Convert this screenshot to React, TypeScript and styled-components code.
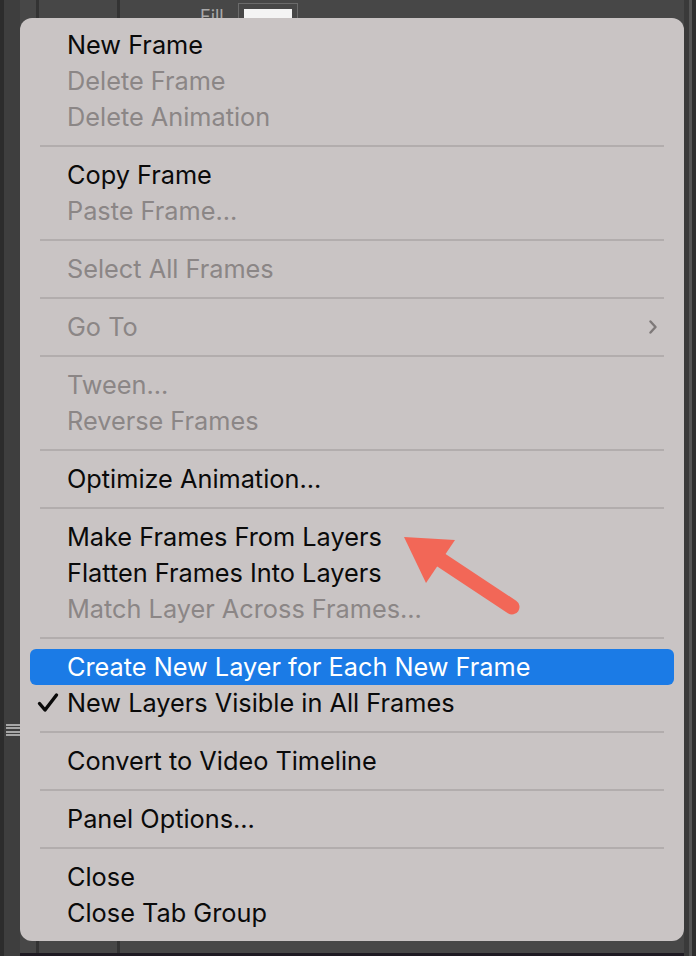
import styled, { createGlobalStyle } from "styled-components";
import { Fragment } from "react";

const GlobalStyle = createGlobalStyle`
    html, body {
        margin: 0;
        padding: 0;
        background: #474747;
    }
    body {
        font-family: "Inter", "Noto Sans", sans-serif;
    }
`

const Page = styled.div`
    display: flex;
    width: 696px;
    height: 956px;
    overflow: hidden;
    background: #474747;
`

const LeftRail = styled.div`
    width: 20px;
    display: flex;
    flex-direction: column;
    justify-content: flex-end;
    padding-bottom: 220px;
    box-sizing: border-box;
    background: linear-gradient(to right, #2c2c2c 0, #2c2c2c 4px, #3e3e3e 4px);
`

const Burger = styled.div`
    margin-left: 6px;
    width: 14px;
    height: 12px;
    background: repeating-linear-gradient(to bottom, #a6a6a6 0, #a6a6a6 2px, transparent 2px, transparent 3.5px);
`

const RightRail = styled.div`
    width: 12px;
    background: linear-gradient(to right, #3a3a3a 0, #3a3a3a 5px, #555 5px, #555 8px, #2e2e2e 8px);
`

const Center = styled.div`
    flex: 1;
    display: flex;
    flex-direction: column;
    background:
        linear-gradient(to right,
            transparent 0, transparent 16px, #333 16px, #333 19px,
            transparent 19px, transparent 97px, #333 97px, #333 100px,
            transparent 100px);
`

const TopStrip = styled.div`
    height: 18px;
    display: flex;
    align-items: flex-start;
    overflow: hidden;
`

const FillLabel = styled.span`
    margin-left: 180px;
    margin-top: 8px;
    font-size: 18px;
    line-height: 18px;
    color: #a9a9a9;
`

const Swatch = styled.div`
    margin-left: 14px;
    margin-top: 3px;
    width: 60px;
    height: 20px;
    box-sizing: border-box;
    border: 1px solid #6b6b6b;
    padding: 5px 5px 0;
    &::after {
        content: "";
        display: block;
        height: 20px;
        background: #f4f4f4;
    }
`

const BottomStrip = styled.div`
    height: 15px;
    background: linear-gradient(to bottom, transparent 0, transparent 12px, #1e1a22 12px);
`

const Menu = styled.div`
    position: relative;
    flex: 1;
    background: #c9c4c4;
    border-radius: 12px;
    padding: 9px 10px 10px;
    box-sizing: border-box;
`

const Item = styled.div<{ $disabled?: boolean; $active?: boolean }>`
    display: flex;
    align-items: center;
    height: 36px;
    border-radius: 6px;
    padding-right: 17px;
    font-size: 25.3px;
    line-height: 36px;
    color: ${p => p.$active ? "#ffffff" : p.$disabled ? "#8b8686" : "#0a0a0a"};
    background: ${p => p.$active ? "#1b7be6" : "transparent"};
`

const Gutter = styled.div`
    width: 37px;
    display: flex;
    align-items: center;
    padding-left: 7px;
    box-sizing: border-box;
`

const Label = styled.span`
    flex: 1;
    white-space: nowrap;
`

const Separator = styled.div`
    height: 22px;
    display: flex;
    align-items: center;
    padding: 0 10px;
    &::after {
        content: "";
        flex: 1;
        height: 2px;
        background: #b2adad;
    }
`

const ArrowMark = styled.svg`
    position: absolute;
    left: 354px;
    top: 491px;
    overflow: visible;
`

type Entry = { label: string; disabled?: boolean; active?: boolean; checked?: boolean; submenu?: boolean } | "sep"

const entries: Entry[] = [
    { label: "New Frame" },
    { label: "Delete Frame", disabled: true },
    { label: "Delete Animation", disabled: true },
    "sep",
    { label: "Copy Frame" },
    { label: "Paste Frame...", disabled: true },
    "sep",
    { label: "Select All Frames", disabled: true },
    "sep",
    { label: "Go To", disabled: true, submenu: true },
    "sep",
    { label: "Tween...", disabled: true },
    { label: "Reverse Frames", disabled: true },
    "sep",
    { label: "Optimize Animation..." },
    "sep",
    { label: "Make Frames From Layers" },
    { label: "Flatten Frames Into Layers" },
    { label: "Match Layer Across Frames...", disabled: true },
    "sep",
    { label: "Create New Layer for Each New Frame", active: true },
    { label: "New Layers Visible in All Frames", checked: true },
    "sep",
    { label: "Convert to Video Timeline" },
    "sep",
    { label: "Panel Options..." },
    "sep",
    { label: "Close" },
    { label: "Close Tab Group" },
]

const Check = () => (
    <svg width="22" height="22" viewBox="0 0 22 22">
        <path d="M2.5 11.5 L8 18 L19.5 3" fill="none" stroke="#0a0a0a" strokeWidth="3.4" strokeLinecap="round" strokeLinejoin="round" />
    </svg>
)

const Chevron = () => (
    <svg width="8" height="14" viewBox="0 0 8 14">
        <path d="M1.5 1.5 L6.5 7 L1.5 12.5" fill="none" stroke="#7e7979" strokeWidth="2.4" strokeLinecap="round" strokeLinejoin="round" />
    </svg>
)

const App = (): JSX.Element => {
    return(
        <Page>
            <GlobalStyle />
            <LeftRail>
                <Burger />
            </LeftRail>
            <Center>
                <TopStrip>
                    <FillLabel>Fill</FillLabel>
                    <Swatch />
                </TopStrip>
                <Menu>
                    {
                    entries.map((e, i) => (
                    <Fragment key={i}>
                        {e === "sep" ? <Separator /> : (
                        <Item $disabled={e.disabled} $active={e.active}>
                            <Gutter>{e.checked && <Check />}</Gutter>
                            <Label>{e.label}</Label>
                            {e.submenu && <Chevron />}
                        </Item>
                        )}
                    </Fragment>
                    ))
                    }
                    <ArrowMark width="160" height="110" viewBox="374 509 160 110">
                        <line x1="438" y1="558" x2="512" y2="607" stroke="#f26757" strokeWidth="15" strokeLinecap="round" />
                        <polygon points="404,537 455,540 426,583" fill="#f26757" />
                    </ArrowMark>
                </Menu>
                <BottomStrip />
            </Center>
            <RightRail />
        </Page>
    )
};

export default App
